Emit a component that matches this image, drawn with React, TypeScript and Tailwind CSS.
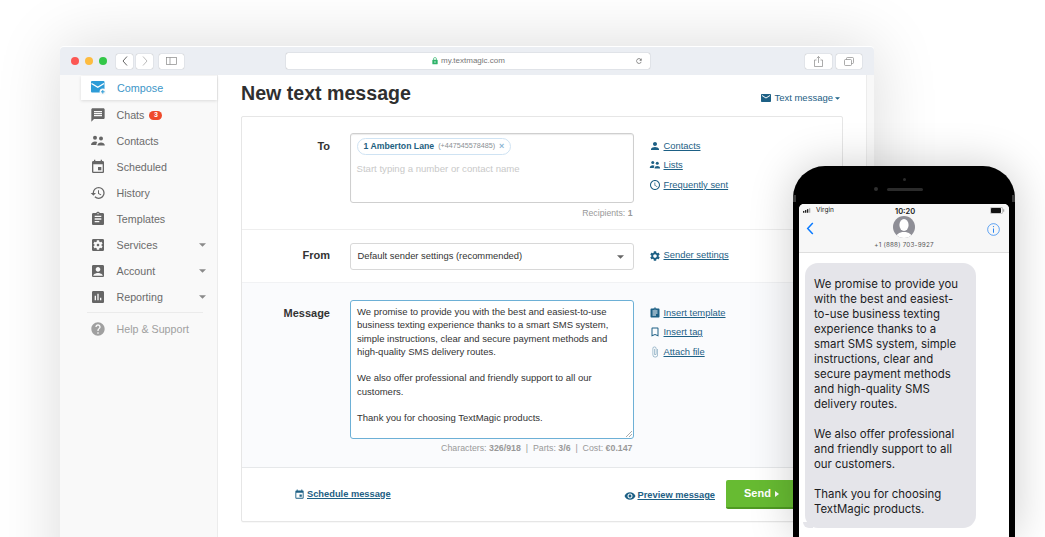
import React from 'react'
import {
  MdAccessTime,
  MdAccountBox,
  MdAssessment,
  MdAssignment,
  MdAttachFile,
  MdBookmarkBorder,
  MdEmail,
  MdEvent,
  MdHelp,
  MdHistory,
  MdLock,
  MdMessage,
  MdPerson,
  MdRefresh,
  MdSettings,
  MdSettingsApplications,
  MdVisibility,
} from 'react-icons/md'

const Caret = ({ className }: { className: string }) => (
  <svg viewBox="0 0 8 4" className={className} fill="currentColor">
    <path d="M0 0h8L4 4z" />
  </svg>
)

const ComposeIcon = () => (
  <svg viewBox="0 0 15 14" className="w-[15px] h-[14px]">
    <rect x="0" y="0" width="13.5" height="11.5" rx="1" fill="#2d9cd7" />
    <path d="M0.5 2.5L6.8 6.3L13 2.5" fill="none" stroke="#fff" strokeWidth="1.4" />
    <circle cx="11.8" cy="10.8" r="3.2" fill="#f9f9f9" />
    <path d="M11.8 9v3.6M10 10.8h3.6" stroke="#2d9cd7" strokeWidth="1" />
  </svg>
)

const PeopleIcon = ({ className }: { className?: string }) => (
  <svg viewBox="0 0 16 16" className={className} fill="currentColor">
    <circle cx="5" cy="4.8" r="2" />
    <circle cx="11" cy="5.6" r="2" />
    <path d="M1 12c0-2.4 2-3.6 4-3.6 1 0 1.8.3 2.4.7-.7.6-1 1.6-1 2.9z" />
    <path d="M7.4 12.5c0-2 1.700-3.100 3.600-3.100s3.800 1.100 3.800 3.100z" />
  </svg>
)

const navItems = [
  { label: 'Chats', icon: MdMessage, badge: '3' },
  { label: 'Contacts', icon: PeopleIcon },
  { label: 'Scheduled', icon: MdEvent },
  { label: 'History', icon: MdHistory },
  { label: 'Templates', icon: MdAssignment },
  { label: 'Services', icon: MdSettingsApplications, caret: true },
  { label: 'Account', icon: MdAccountBox, caret: true },
  { label: 'Reporting', icon: MdAssessment, caret: true },
]

const Sidebar = () => (
  <aside className="w-[158px] shrink-0 bg-[#f9f9f9] border-r border-[#ececec] pl-[21px] pt-px">
    <div className="flex items-center h-[24px] bg-white pl-[10px] shadow-[0_1px_3px_rgba(0,0,0,0.12)] mb-[2px]">
      <ComposeIcon />
      <span className="ml-[11px] text-[10.8px] text-[#3d96c8]">Compose</span>
    </div>
    {navItems.map((item) => (
      <div key={item.label} className="flex items-center h-[26px] pl-[9px] pr-[11px] text-[#6b6b6b]">
        <item.icon className="w-[16px] h-[16px] text-[#666]" />
        <span className="ml-[10.5px] text-[10.7px]">{item.label}</span>
        {item.badge && (
          <span className="ml-[5px] flex items-center justify-center w-[13px] h-[9px] rounded-full bg-[#ef4a2b] text-white text-[7px] font-bold">
            {item.badge}
          </span>
        )}
        {item.caret && <Caret className="ml-auto w-[7px] h-[4px] text-[#8a8a8a]" />}
      </div>
    ))}
    <div className="mt-[2px] mr-[14px] ml-[6px] border-t border-[#ebebeb]" />
    <div className="flex items-center h-[32px] pl-[9px] text-[#a0a0a0]">
      <MdHelp className="w-[16px] h-[16px]" />
      <span className="ml-[10.5px] text-[10.7px]">Help &amp; Support</span>
    </div>
  </aside>
)

const SideLink = ({ icon: Icon, label, iconClass = 'text-[#1d6085]' }: { icon: React.ElementType; label: string; iconClass?: string }) => (
  <div className="flex items-center h-[19.5px]">
    <Icon className={`w-[12px] h-[12px] ${iconClass}`} />
    <a className="ml-[3px] text-[9.4px] text-[#1d6085] underline underline-offset-1">{label}</a>
  </div>
)

const Label = ({ children }: { children: React.ReactNode }) => (
  <div className="w-[88px] shrink-0 text-right text-[11px] font-bold text-[#333]">{children}</div>
)

const Card = () => (
  <div className="w-[602px] h-[406px] bg-white border border-[#e6e6e6] rounded-[2px] shadow-[0_1px_1px_rgba(0,0,0,0.03)] flex flex-col">
    {/* To */}
    <div className="h-[113px] flex border-b border-[#eeeeee] pt-[16px]">
      <div className="pt-[5px]">
        <Label>To</Label>
      </div>
      <div className="ml-[19.5px] w-[284px]">
        <div className="h-[70px] border border-[#cfcfcf] rounded-[3px] shadow-[inset_0_1px_1px_rgba(0,0,0,0.08)] px-[6px] pt-[4px]">
          <div className="flex w-fit items-center h-[17px] rounded-full border border-[#cfe3f3] px-[6px] whitespace-nowrap">
            <span className="text-[8.7px] font-bold text-[#1d5f80]">1 Amberton Lane</span>
            <span className="ml-[4px] text-[7.2px] text-[#8a8f94]">(+447545578485)</span>
            <span className="ml-[4px] text-[9px] font-bold leading-none text-[#8db7d4]">×</span>
          </div>
          <div className="mt-[7px] text-[9.6px] text-[#c9c9c9]">Start typing a number or contact name</div>
        </div>
        <div className="mt-[4px] text-right text-[8.7px] text-[#999] pr-px">
          Recipients: <b className="font-bold">1</b>
        </div>
      </div>
      <div className="ml-[15px] pt-[3px]">
        <SideLink icon={MdPerson} label="Contacts" />
        <SideLink icon={PeopleIcon} label="Lists" />
        <SideLink icon={MdAccessTime} label="Frequently sent" />
      </div>
    </div>
    {/* From */}
    <div className="h-[53px] flex items-center border-b border-[#f1f2f4]">
      <div className="-mt-[1px]">
        <Label>From</Label>
      </div>
      <div className="ml-[19.5px] w-[284px] h-[27px] mt-[1px] border border-[#d8d8d8] rounded-[3px] flex items-center pl-[7px] pr-[9px]">
        <span className="text-[9.4px] text-[#333]">Default sender settings (recommended)</span>
        <Caret className="ml-auto w-[7px] h-[4px] text-[#666]" />
      </div>
      <div className="ml-[15px] -mt-[1px]">
        <SideLink icon={MdSettings} label="Sender settings" />
      </div>
    </div>
    {/* Message */}
    <div className="h-[185px] flex bg-[#fafbfd] border-b border-[#e6e8ea] pt-[17px]">
      <div className="pt-[5px]">
        <Label>Message</Label>
      </div>
      <div className="ml-[19.5px] w-[284px]">
        <div className="relative h-[139px] bg-white border border-[#6db0d6] rounded-[3px] px-[6.5px] pt-[4px] text-[9.5px] leading-[13.3px] text-[#333]">
          We promise to provide you with the best and easiest-to-use
          <br />
          business texting experience thanks to a smart SMS system,
          <br />
          simple instructions, clear and secure payment methods and
          <br />
          high-quality SMS delivery routes.
          <br />
          <br />
          We also offer professional and friendly support to all our
          <br />
          customers.
          <br />
          <br />
          Thank you for choosing TextMagic products.
          <svg viewBox="0 0 6 6" className="absolute right-px bottom-px w-[6px] h-[6px]" stroke="#888" strokeWidth="0.7">
            <path d="M0 6L6 0M3 6L6 3" />
          </svg>
        </div>
        <div className="mt-[3px] text-right text-[8.8px] text-[#999] pr-px whitespace-nowrap">
          Characters: <b>326/918</b>&nbsp; | &nbsp;Parts: <b>3/6</b>&nbsp; | &nbsp;Cost: <b>€0.147</b>
        </div>
      </div>
      <div className="ml-[15px] mt-[3px]">
        <SideLink icon={MdAssignment} label="Insert template" />
        <SideLink icon={MdBookmarkBorder} label="Insert tag" />
        <SideLink icon={MdAttachFile} label="Attach file" iconClass="text-[#8fb0c4]" />
      </div>
    </div>
    {/* Footer */}
    <div className="flex-1 flex items-center pl-[52px]">
      <div className="flex items-center">
        <MdEvent className="w-[11px] h-[11px] text-[#1d6085]" />
        <a className="ml-[2px] text-[9.3px] font-bold text-[#1d6085] underline underline-offset-1">Schedule message</a>
      </div>
      <div className="ml-auto flex items-center mr-[11px] mt-[3px]">
        <MdVisibility className="w-[12px] h-[12px] text-[#1d6085]" />
        <a className="ml-[1px] text-[9.3px] font-bold text-[#1d6085] underline underline-offset-1">Preview message</a>
      </div>
      <button className="w-[116px] h-[29px] bg-[#67bb32] border-b-2 border-[#4f9a22] rounded-[2px] flex items-center pl-[18px] text-[11px] font-bold text-white">
        Send
        <svg viewBox="0 0 4 6" className="ml-[4px] w-[4px] h-[6px]" fill="currentColor">
          <path d="M0 0l4 3-4 3z" />
        </svg>
      </button>
    </div>
  </div>
)

const Toolbar = () => (
  <div className="h-[28px] bg-[#ebeef3] flex items-center pl-[11px] rounded-t-[4px]">
    <span className="w-[8px] h-[8px] rounded-full bg-[#fc5753]" />
    <span className="ml-[6px] w-[8px] h-[8px] rounded-full bg-[#fdbc40]" />
    <span className="ml-[6px] w-[8px] h-[8px] rounded-full bg-[#33c748]" />
    <div className="ml-[9px] w-[17px] h-[15px] bg-white rounded-[2px] shadow-[0_0_1px_rgba(0,0,0,0.4)] flex items-center justify-center">
      <svg viewBox="0 0 6 10" className="w-[6px] h-[10px]" fill="none" stroke="#666" strokeWidth="1">
        <path d="M5 0.5L1 5l4 4.5" />
      </svg>
    </div>
    <div className="ml-[3px] w-[17px] h-[15px] bg-white rounded-[2px] shadow-[0_0_1px_rgba(0,0,0,0.4)] flex items-center justify-center">
      <svg viewBox="0 0 6 10" className="w-[6px] h-[10px]" fill="none" stroke="#bbb" strokeWidth="1">
        <path d="M1 0.5L5 5l-4 4.5" />
      </svg>
    </div>
    <div className="ml-[6px] w-[25px] h-[15px] bg-white rounded-[2px] shadow-[0_0_1px_rgba(0,0,0,0.4)] flex items-center justify-center">
      <svg viewBox="0 0 11 8" className="w-[11px] h-[8px]" fill="none" stroke="#888" strokeWidth="0.7">
        <rect x="0.5" y="0.5" width="10" height="7" />
        <path d="M4 0.5v7" />
      </svg>
    </div>
    <div className="ml-[102px] w-[364px] h-[16px] bg-white rounded-[2px] shadow-[0_0_1px_rgba(0,0,0,0.45)] flex items-center justify-center relative">
      <MdLock className="w-[8px] h-[8px] text-[#2fb36a]" />
      <span className="ml-[2px] text-[8px] text-[#777]">my.textmagic.com</span>
      <MdRefresh className="absolute right-[7px] top-[4px] w-[8px] h-[8px] text-[#777]" />
    </div>
    <div className="ml-[155px] w-[27px] h-[15px] bg-white rounded-[2px] shadow-[0_0_1px_rgba(0,0,0,0.4)] flex items-center justify-center">
      <svg viewBox="0 0 9 11" className="w-[9px] h-[11px]" fill="none" stroke="#888" strokeWidth="0.7">
        <path d="M2.5 4H.5v6.5h8V4h-2M4.5 7V.5M2.8 2.2L4.5.5l1.7 1.7" />
      </svg>
    </div>
    <div className="ml-[4px] w-[26px] h-[15px] bg-white rounded-[2px] shadow-[0_0_1px_rgba(0,0,0,0.4)] flex items-center justify-center">
      <svg viewBox="0 0 10 9" className="w-[10px] h-[9px]" fill="none" stroke="#888" strokeWidth="0.7">
        <rect x="0.5" y="2.5" width="7" height="6" rx="1" />
        <path d="M2.5 2.5v-1a1 1 0 011-1h5a1 1 0 011 1v4a1 1 0 01-1 1h-1" />
      </svg>
    </div>
  </div>
)

const Phone = () => (
  <div className="absolute left-[793px] top-[166px] w-[222px] h-[371px] bg-black rounded-t-[32px] px-[6px] pt-[38px] shadow-[0_0_45px_rgba(0,0,0,0.2)]">
    <span className="absolute left-0 top-[29px] w-[3px] h-[7px] bg-[#3a3a3a]" />
    <span className="absolute right-0 top-[29px] w-[3px] h-[7px] bg-[#3a3a3a]" />
    <span className="absolute left-[110px] top-[12px] w-[3px] h-[3px] rounded-full bg-[#2b2b2b]" />
    <span className="absolute left-[81px] top-[21px] w-[4px] h-[4px] rounded-full bg-[#2f2f2f]" />
    <span className="absolute left-[94px] top-[22px] w-[36px] h-[3px] rounded-full bg-[#2b2b2b]" />
    <div className="h-full bg-white rounded-t-[5px] overflow-hidden">
      <div className="relative h-[49px] bg-[#f7f7f7] border-b border-[#dedede]">
        <div className="flex items-center h-[13px] px-[4px] text-[6.5px] text-[#222]" style={{ fontFamily: 'Inter, sans-serif' }}>
          <svg viewBox="0 0 10 5" className="w-[9px] h-[5px]">
            <rect x="0" y="3" width="1.5" height="2" fill="#222" />
            <rect x="2.2" y="2" width="1.5" height="3" fill="#222" />
            <rect x="4.4" y="1" width="1.5" height="4" fill="#222" />
            <rect x="6.6" y="0" width="1.5" height="5" fill="#aaa" />
          </svg>
          <span className="ml-[4px]">Virgin</span>
          <span className="absolute left-[96px] top-[2px] font-semibold text-[7.5px]">10:20</span>
          <svg viewBox="0 0 15 7" className="ml-auto w-[15px] h-[7px]">
            <rect x="0.3" y="0.3" width="12.4" height="6.4" rx="1.5" fill="none" stroke="#999" strokeWidth="0.6" />
            <rect x="1" y="1" width="10" height="5" rx="0.8" fill="#111" />
            <rect x="13.2" y="2.3" width="1" height="2.4" fill="#999" />
          </svg>
        </div>
        <svg viewBox="0 0 8 14" className="absolute left-[7px] top-[18px] w-[8px] h-[13px]" fill="none" stroke="#0a7aff" strokeWidth="1.6">
          <path d="M7 1L1.5 7L7 13" />
        </svg>
        <svg viewBox="0 0 22 22" className="absolute left-[94px] top-[12px] w-[22px] h-[22px]">
          <defs>
            <clipPath id="avatar">
              <circle cx="11" cy="11" r="11" />
            </clipPath>
          </defs>
          <circle cx="11" cy="11" r="11" fill="#8e8e96" />
          <g clipPath="url(#avatar)" fill="#fff">
            <ellipse cx="11" cy="9" rx="4.6" ry="6" />
            <path d="M3 22c0-4 3-5 6-6h4c3 1 6 2 6 6z" />
          </g>
        </svg>
        <div className="absolute left-0 right-0 top-[37px] text-center text-[6.3px] leading-[9px] tracking-[0.2px] text-[#555]" style={{ fontFamily: 'Inter, sans-serif' }}>
          +1 (888) 703-9927
        </div>
        <svg viewBox="0 0 14 14" className="absolute right-[9px] top-[19px] w-[13px] h-[13px]" fill="none" stroke="#2a86f2" strokeWidth="0.8">
          <circle cx="7" cy="7" r="6.3" />
          <path d="M7 6v4.5" strokeWidth="1.1" />
          <circle cx="7" cy="3.9" r="0.7" fill="#2a86f2" stroke="none" />
        </svg>
      </div>
      <div className="relative ml-[6px] mt-[10px] w-[171px] h-[265px] bg-[#e5e5ea] rounded-[13px] pl-[9px] pt-[14px] text-[11.4px] leading-[15px] text-[#1c1c1e]" style={{ fontFamily: 'Inter, sans-serif' }}>
        We promise to provide you
        <br />
        with the best and easiest-
        <br />
        to-use business texting
        <br />
        experience thanks to a
        <br />
        smart SMS system, simple
        <br />
        instructions, clear and
        <br />
        secure payment methods
        <br />
        and high-quality SMS
        <br />
        delivery routes.
        <br />
        <br />
        We also offer professional
        <br />
        and friendly support to all
        <br />
        our customers.
        <br />
        <br />
        Thank you for choosing
        <br />
        TextMagic products.
        <span className="absolute -left-[2px] bottom-0 w-[10px] h-[6px] bg-[#e5e5ea] rounded-bl-[6px]" />
      </div>
    </div>
  </div>
)

export default function App() {
  return (
    <div className="relative w-[1045px] h-[537px] overflow-hidden bg-white pl-[60px] pt-[46px]" style={{ fontFamily: '"Liberation Sans", Arial, sans-serif' }}>
      <div className="w-[814px] h-[560px] bg-white rounded-t-[4px] shadow-[0_0_65px_rgba(0,0,0,0.15)] border-t border-white">
        <Toolbar />
        <div className="flex h-full">
          <Sidebar />
          <main className="w-[648px] pl-[23px]">
            <div className="flex items-center h-[41px] pr-[26px]">
              <h1 className="text-[19.6px] font-bold text-[#2f2f2f] -mt-[3px]">New text message</h1>
              <div className="ml-auto flex items-center text-[9.5px] text-[#1d6085] mt-[5px]">
                <MdEmail className="w-[12px] h-[12px]" />
                <span className="ml-[2px]">Text message</span>
                <Caret className="ml-[2px] w-[5px] h-[3px]" />
              </div>
            </div>
            <Card />
          </main>
          <div className="w-[8px] bg-[#f8f8f8] border-l border-[#ececec]" />
        </div>
      </div>
      <Phone />
    </div>
  )
}
